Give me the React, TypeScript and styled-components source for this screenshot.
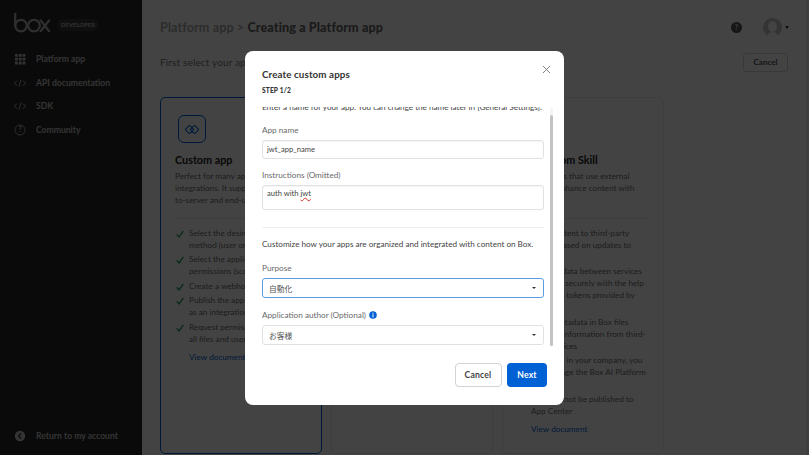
import styled, { createGlobalStyle } from "styled-components"
import { ReactNode } from "react"

const GlobalStyle = createGlobalStyle`
  html, body {
    margin: 0;
    padding: 0;
    width: 809px;
    height: 455px;
    overflow: hidden;
    font-family: Lato, "Noto Sans CJK JP", sans-serif;
    color: #222;
    -webkit-font-smoothing: antialiased;
  }
  * {
    box-sizing: border-box;
  }
`

const Page = styled.div`
  position: relative;
  display: flex;
  width: 809px;
  height: 455px;
  overflow: hidden;
  background: #fff;
`

const Sidebar = styled.aside`
  width: 142px;
  flex-shrink: 0;
  background: #272727;
  display: flex;
  flex-direction: column;
  padding: 13px 0 0 14px;
`

const Brand = styled.div`
  display: flex;
  align-items: center;
  gap: 7px;
  height: 20px;
  margin-bottom: 19px;
`

const Badge = styled.span`
  background: #3c3c3c;
  color: #bdbdbd;
  border-radius: 5px;
  font-size: 5.6px;
  font-weight: 700;
  letter-spacing: 0.2px;
  padding: 2.5px 2px;
  margin-top: 3px;
  width: 40px;
  text-align: center;
`

const NavList = styled.nav`
  display: flex;
  flex-direction: column;
  gap: 9.7px;
  flex: 1;
`

const NavItem = styled.a`
  display: flex;
  align-items: center;
  gap: 10px;
  height: 14px;
  color: #c4c4c4;
  font-size: 8.6px;
  font-weight: 700;

  svg {
    width: 12px;
    height: 12px;
    flex-shrink: 0;
  }
`

const ReturnLink = styled(NavItem)`
  margin-bottom: 12px;
`

const Main = styled.main`
  flex: 1;
  min-width: 0;
  padding: 0 18px;
  display: flex;
  flex-direction: column;
  position: relative;
`

const Header = styled.header`
  display: flex;
  align-items: center;
  justify-content: space-between;
  height: 54px;
`

const Crumbs = styled.h1`
  margin: 0;
  font-size: 12.6px;
  font-weight: 700;
  color: #a9a9a9;
  letter-spacing: 0.1px;

  b {
    color: #666;
  }
`

const HeaderTools = styled.div`
  display: flex;
  align-items: center;
  gap: 21px;
  margin-right: 2px;
`

const Caret = styled.span<{ $small?: boolean }>`
  width: 0;
  height: 0;
  border-left: ${(p) => (p.$small ? 2 : 2.5)}px solid transparent;
  border-right: ${(p) => (p.$small ? 2 : 2.5)}px solid transparent;
  border-top: ${(p) => (p.$small ? 2 : 3)}px solid #333;
`

const AvatarWrap = styled.div`
  display: flex;
  align-items: center;
  gap: 3px;
`

const Intro = styled.div`
  display: flex;
  align-items: center;
  justify-content: space-between;
  height: 20px;
  margin-top: -2px;
  font-size: 10px;
  color: #7a7a7a;
  letter-spacing: 0.15px;
`

const GhostButton = styled.button`
  width: 45px;
  height: 19px;
  border: 1px solid #d4d4d4;
  border-radius: 3px;
  background: #fff;
  color: #555;
  font: 700 8px Lato, sans-serif;
  margin-right: 3px;
`

const Cards = styled.section`
  display: grid;
  grid-template-columns: repeat(3, 162px);
  gap: 9px;
  margin-top: 25px;
  flex: 1;
  margin-bottom: 1px;
  min-height: 0;
`

const Card = styled.article<{ $selected?: boolean }>`
  border: 1px solid ${(p) => (p.$selected ? "#0061d5" : "#ececec")};
  border-radius: 5px;
  padding: 17px 14px 0;
  background: #fff;
  overflow: hidden;
`

const CardIcon = styled.div`
  width: 28px;
  height: 28px;
  border: 1px solid #0061d5;
  border-radius: 6px;
  margin: 0 0 0 3px;
  display: flex;
  align-items: center;
  justify-content: center;
`

const CardIconSpacer = styled.div`
  height: 28px;
`

const CardTitle = styled.h2`
  margin: 10px 0 0;
  font-size: 10.8px;
  line-height: 14px;
  font-weight: 700;
  color: #222;
  white-space: nowrap;
`

const CardText = styled.p`
  margin: 3px 0 0;
  height: 36px;
  font-size: 8.2px;
  line-height: 12px;
  color: #6f6f6f;
  white-space: nowrap;
`

const CardRule = styled.hr`
  border: 0;
  border-top: 1px solid #e8e8e8;
  margin: 12px 0 7.5px;
`

const Features = styled.ul`
  list-style: none;
  margin: 0;
  padding: 0;
  display: flex;
  flex-direction: column;
  gap: 2.6px;
`

const Feature = styled.li`
  display: flex;
  gap: 5px;
  padding-left: 1px;
  font-size: 8.2px;
  line-height: 12px;
  color: #6f6f6f;
  white-space: nowrap;

  svg {
    flex-shrink: 0;
    margin-top: 3px;
  }
`

const DocLink = styled.a`
  display: block;
  margin: 6px 0 0 14px;
  font-size: 8.2px;
  line-height: 12px;
  color: #0061d5;
`

const PageScroll = styled.div`
  position: absolute;
  top: 0;
  right: 0;
  width: 3px;
  height: 100%;
  background: #ececec;
`

const Overlay = styled.div`
  position: absolute;
  inset: 0;
  background: rgba(0, 0, 0, 0.737);
  display: flex;
  align-items: center;
  justify-content: center;
`

const Modal = styled.div`
  position: relative;
  width: 319px;
  height: 354px;
  margin-top: 1px;
  background: #fff;
  border-radius: 8px;
  padding: 17px 17px 18px 17px;
  display: flex;
  flex-direction: column;
`

const ModalTitle = styled.h2`
  margin: 0;
  font-size: 9.8px;
  line-height: 12px;
  font-weight: 700;
  color: #333;
  letter-spacing: 0.1px;
`

const StepLabel = styled.div`
  margin-top: 6px;
  font-size: 6.6px;
  line-height: 9px;
  font-weight: 900;
  color: #333;
  letter-spacing: 0.15px;
`

const CloseButton = styled.button`
  position: absolute;
  top: 13.5px;
  right: 13.5px;
  width: 9px;
  height: 9px;
  padding: 0;
  border: 0;
  background: none;
  display: flex;

  svg {
    width: 9px;
    height: 9px;
  }
`

const ScrollArea = styled.div`
  position: relative;
  height: 240px;
  margin-top: 12px;
  overflow: hidden;
  margin-right: -9px;
  padding-right: 9px;
`

const ScrollInner = styled.div`
  margin-top: -6.5px;
  display: flex;
  flex-direction: column;
`

const ScrollTrack = styled.div`
  position: absolute;
  top: 1px;
  right: 3px;
  bottom: 1px;
  width: 3px;
  background: #f4f4f4;
  border-radius: 2px;
`

const ScrollThumb = styled.div`
  margin-top: 7px;
  height: 231px;
  background: #c3c3c3;
  border-radius: 2px;
`

const HelpText = styled.p<{ $gap?: number }>`
  margin: ${(p) => p.$gap ?? 0}px 0 0;
  font-size: 8.15px;
  line-height: 12px;
  color: #444;
  white-space: nowrap;
`

const FieldLabel = styled.label<{ $gap: number }>`
  display: flex;
  align-items: center;
  gap: 3px;
  margin-top: ${(p) => p.$gap}px;
  font-size: 8.2px;
  line-height: 12px;
  color: #6a6a6a;
`

const InputBox = styled.div<{ $tall?: boolean }>`
  height: ${(p) => (p.$tall ? 25 : 18.5)}px;
  margin-top: 4px;
  width: 282px;
  border: 1px solid #e1e1e1;
  border-radius: 3px;
  padding: ${(p) => (p.$tall ? "1px" : "2.2px")} 4px;
  font-size: 7.6px;
  line-height: 12px;
  color: #444;
  box-shadow: inset 0 1px 1px rgba(0, 0, 0, 0.04);
`

const Misspelled = styled.span`
  text-decoration: underline wavy #d0342c;
  text-decoration-thickness: 0.7px;
`

const Divider = styled.hr`
  border: 0;
  border-top: 1px solid #efefef;
  width: 282px;
  margin: 17px 0 0;
`

const SelectBox = styled.div<{ $focused?: boolean }>`
  height: 20px;
  width: 282px;
  margin-top: 4px;
  padding: 0 7px 0 6px;
  display: flex;
  align-items: center;
  justify-content: space-between;
  border: 1px solid ${(p) => (p.$focused ? "#5a9be6" : "#e1e1e1")};
  border-radius: 3px;
  font-size: 7.8px;
  color: #555;
`

const Footer = styled.footer`
  display: flex;
  justify-content: flex-end;
  gap: 5.5px;
  margin: 16px 0 0;
`

const SecondaryButton = styled.button`
  width: 47px;
  height: 24px;
  border: 1px solid #d3d3d3;
  border-radius: 4px;
  background: #fff;
  color: #444;
  font: 700 8.6px Lato, sans-serif;
  letter-spacing: 0.2px;
`

const PrimaryButton = styled.button`
  width: 40px;
  height: 24px;
  border: 0;
  border-radius: 4px;
  background: #0061d5;
  color: #fff;
  font: 700 8.6px Lato, sans-serif;
  letter-spacing: 0.2px;
`

const IconText = styled.text`
  font-family: Lato, sans-serif;
  font-weight: 700;
`

function BoxLogo() {
  return (
    <svg width="37" height="20" viewBox="0 0 37 20" fill="none" stroke="#b4b4b4" strokeWidth="2.2">
      <path d="M1.2 0v12.6" />
      <circle cx="7" cy="12.6" r="5.8" />
      <circle cx="20" cy="12.6" r="5.8" />
      <path d="M26.6 7.4l8.6 10.8M35.2 7.4l-8.6 10.8" strokeLinecap="round" />
    </svg>
  )
}

function GridIcon() {
  const cells = [1, 4.8, 8.6]
  return (
    <svg viewBox="0 0 12 12" fill="#c4c4c4">
      {cells.flatMap((y) =>
        cells.map((x) => <rect key={`${x}-${y}`} x={x} y={y} width="2.8" height="2.8" rx="0.5" />)
      )}
    </svg>
  )
}

function CodeIcon() {
  return (
    <svg viewBox="0 0 12 12" fill="none" stroke="#c4c4c4" strokeWidth="0.9">
      <path d="M3 3.6L0.6 6.2 3 8.8M9 3.6l2.4 2.6L9 8.8M7 2.8L5 9.6" />
    </svg>
  )
}

function HelpOutlineIcon() {
  return (
    <svg viewBox="0 0 12 12" fill="none" stroke="#c4c4c4" strokeWidth="0.8">
      <circle cx="6" cy="6" r="5" />
      <IconText x="6" y="8.4" textAnchor="middle" fontSize="7" fill="#c4c4c4" stroke="none">?</IconText>
    </svg>
  )
}

function BackIcon() {
  return (
    <svg viewBox="0 0 12 12">
      <circle cx="6" cy="6" r="5.2" fill="#c4c4c4" />
      <path d="M7 3.4L4.6 6 7 8.6" fill="none" stroke="#272727" strokeWidth="1.3" />
    </svg>
  )
}

function HelpSolidIcon() {
  return (
    <svg width="11" height="11" viewBox="0 0 11 11">
      <circle cx="5.5" cy="5.5" r="5.5" fill="#555" />
      <IconText x="5.5" y="8.2" textAnchor="middle" fontSize="7.5" fill="#e8e8e8">?</IconText>
    </svg>
  )
}

function Avatar() {
  return (
    <svg width="19" height="19" viewBox="0 0 19 19">
      <circle cx="9.5" cy="9.5" r="9.5" fill="#c4c4c4" />
      <ellipse cx="9.5" cy="8.5" rx="4.4" ry="5.6" fill="#fff" />
      <path d="M4 19c.4-3.2 2.6-5 5.5-5s5.1 1.800 5.500 5z" fill="#fff" />
    </svg>
  )
}

function DiamondsIcon() {
  return (
    <svg width="16" height="11" viewBox="0 0 16 11" fill="none" stroke="#0061d5" strokeWidth="1.1">
      <rect x="2.400" y="2.400" width="6.200" height="6.200" rx="1" transform="rotate(45 5.500 5.500)" />
      <rect x="7.400" y="2.400" width="6.200" height="6.200" rx="1" transform="rotate(45 10.500 5.500)" />
    </svg>
  )
}

function Check() {
  return (
    <svg width="8" height="8" viewBox="0 0 8 8" fill="none" stroke="#1f9e5a" strokeWidth="1.300">
      <path d="M0.600 4.400L3 7 7.400 0.800" />
    </svg>
  )
}

function CloseIcon() {
  return (
    <svg viewBox="0 0 10 10" fill="none" stroke="#777" strokeWidth="1">
      <path d="M1 1l8 8M9 1l-8 8" />
    </svg>
  )
}

function InfoIcon() {
  return (
    <svg width="8" height="8" viewBox="0 0 8 8">
      <circle cx="4" cy="4" r="3.800" fill="#0061d5" />
      <rect x="3.500" y="3.300" width="1" height="3" fill="#fff" />
      <rect x="3.500" y="1.700" width="1" height="1" fill="#fff" />
    </svg>
  )
}

function FeatureItem({ children }: { children: ReactNode }) {
  return (
    <Feature>
      <Check />
      <div>{children}</div>
    </Feature>
  )
}

export default function App() {
  return (
    <Page>
      <GlobalStyle />
      <Sidebar>
        <Brand>
          <BoxLogo />
          <Badge>DEVELOPER</Badge>
        </Brand>
        <NavList>
          <NavItem><GridIcon />Platform app</NavItem>
          <NavItem><CodeIcon />API documentation</NavItem>
          <NavItem><CodeIcon />SDK</NavItem>
          <NavItem><HelpOutlineIcon />Community</NavItem>
        </NavList>
        <ReturnLink><BackIcon />Return to my account</ReturnLink>
      </Sidebar>
      <Main>
        <Header>
          <Crumbs>Platform app &gt; <b>Creating a Platform app</b></Crumbs>
          <HeaderTools>
            <HelpSolidIcon />
            <AvatarWrap>
              <Avatar />
              <Caret />
            </AvatarWrap>
          </HeaderTools>
        </Header>
        <Intro>
          <span>First select your app type</span>
          <GhostButton>Cancel</GhostButton>
        </Intro>
        <Cards>
          <Card $selected>
            <CardIcon><DiamondsIcon /></CardIcon>
            <CardTitle>Custom app</CardTitle>
            <CardText>Perfect for many apps and<br />integrations. It supports server-<br />to-server and end-user auth</CardText>
            <CardRule />
            <Features>
              <FeatureItem>Select the desired auth<br />method (user or server)</FeatureItem>
              <FeatureItem>Select the application<br />permissions (scopes)</FeatureItem>
              <FeatureItem>Create a webhook</FeatureItem>
              <FeatureItem>Publish the app<br />as an integration</FeatureItem>
              <FeatureItem>Request permission for<br />all files and users</FeatureItem>
            </Features>
            <DocLink>View document</DocLink>
          </Card>
          <Card>
            <CardIconSpacer />
          </Card>
          <Card>
            <CardIconSpacer />
            <CardTitle>Box Custom Skill</CardTitle>
            <CardText>Develop Skills that use external<br />AI tools to enhance content with</CardText>
            <CardRule />
            <Features>
              <FeatureItem>Send content to third-party<br />service based on updates to<br />in Box</FeatureItem>
              <FeatureItem>Transfer data between services<br />and apps securely with the help<br />of OAuth tokens provided by<br />Box</FeatureItem>
              <FeatureItem>Apply metadata in Box files<br />by using information from third-<br />web services</FeatureItem>
              <FeatureItem>If you are in your company, you<br />can manage the Box AI Platform<br />app</FeatureItem>
              <FeatureItem>Apps cannot be published to<br />App Center</FeatureItem>
            </Features>
            <DocLink>View document</DocLink>
          </Card>
        </Cards>
        <PageScroll />
      </Main>
      <Overlay>
        <Modal>
          <ModalTitle>Create custom apps</ModalTitle>
          <StepLabel>STEP 1/2</StepLabel>
          <CloseButton><CloseIcon /></CloseButton>
          <ScrollArea>
            <ScrollInner>
              <HelpText>Enter a name for your app. You can change the name later in [General Settings].</HelpText>
              <FieldLabel $gap={11.5}>App name</FieldLabel>
              <InputBox>jwt_app_name</InputBox>
              <FieldLabel $gap={10.5}>Instructions (Omitted)</FieldLabel>
              <InputBox $tall>auth with <Misspelled>jwt</Misspelled></InputBox>
              <Divider />
              <HelpText $gap={10}>Customize how your apps are organized and integrated with content on Box.</HelpText>
              <FieldLabel $gap={12}>Purpose</FieldLabel>
              <SelectBox $focused>自動化<Caret $small /></SelectBox>
              <FieldLabel $gap={11}>Application author (Optional) <InfoIcon /></FieldLabel>
              <SelectBox>お客様<Caret $small /></SelectBox>
            </ScrollInner>
            <ScrollTrack><ScrollThumb /></ScrollTrack>
          </ScrollArea>
          <Footer>
            <SecondaryButton>Cancel</SecondaryButton>
            <PrimaryButton>Next</PrimaryButton>
          </Footer>
        </Modal>
      </Overlay>
    </Page>
  )
}
